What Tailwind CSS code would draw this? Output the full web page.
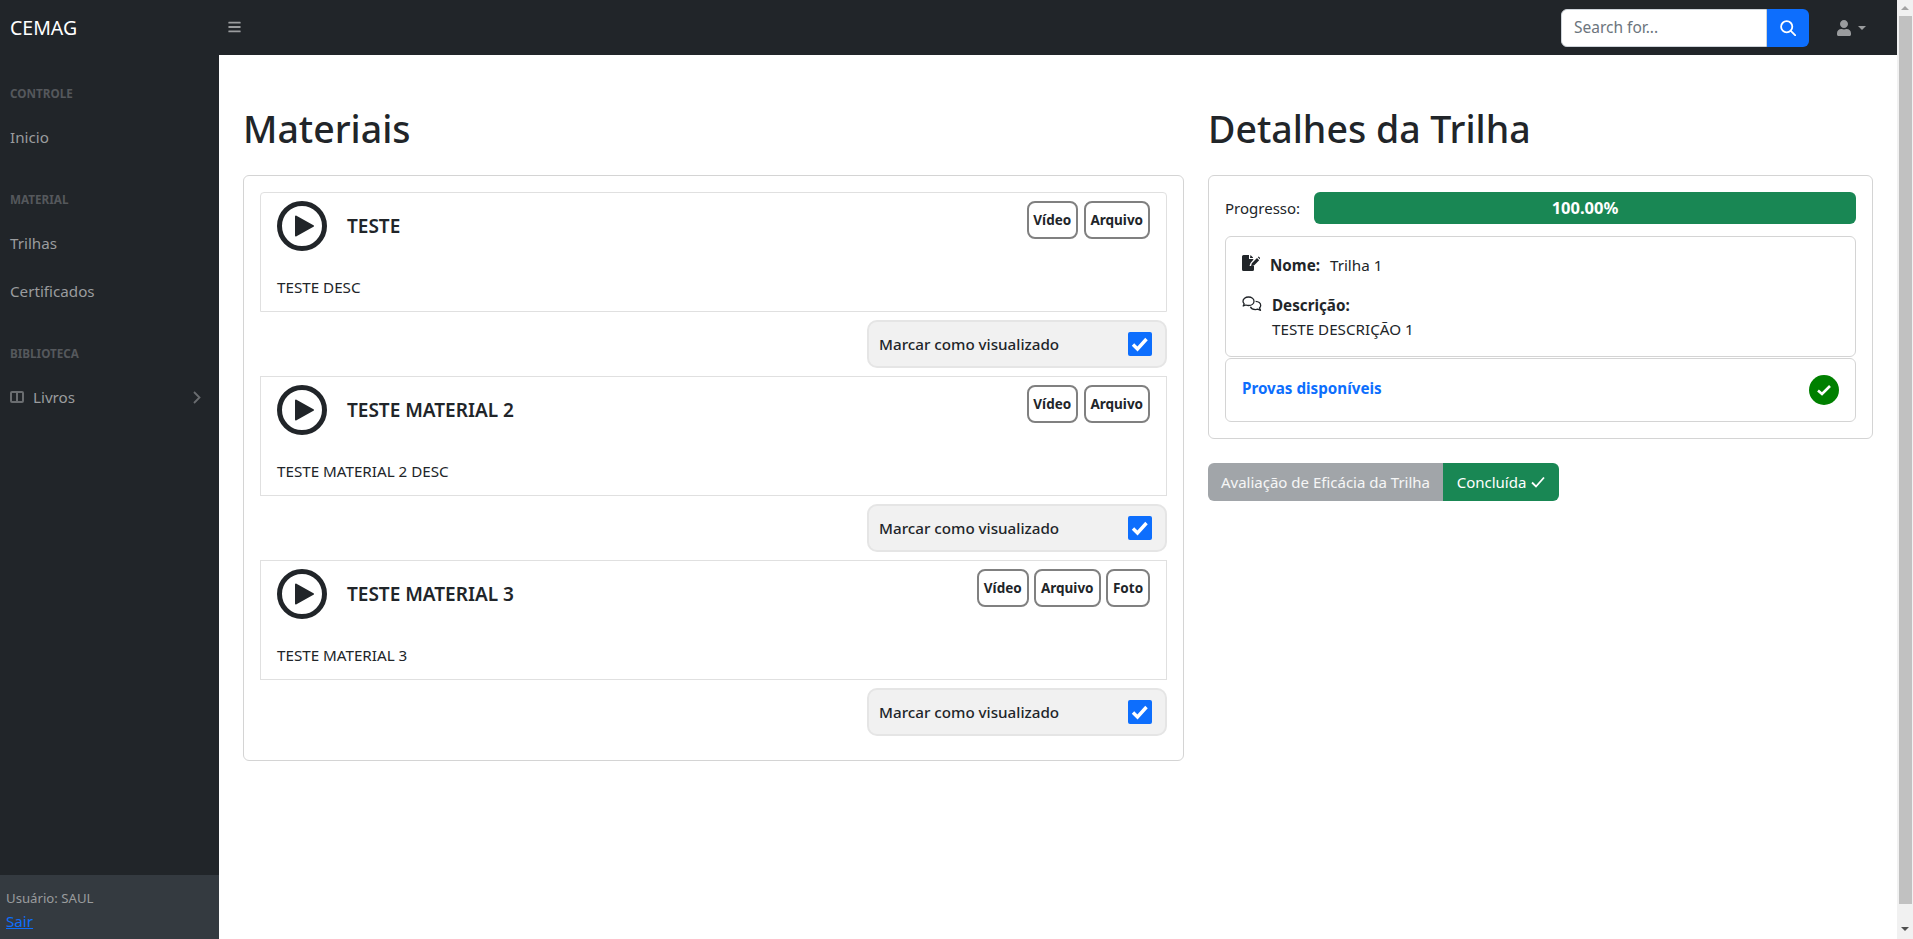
<!DOCTYPE html>
<html lang="pt-BR">
    <head>
        <meta charset="UTF-8">
        <meta name="viewport" content="width=device-width, initial-scale=1.0">
        <title>CEMAG</title>
        <script src="https://cdn.jsdelivr.net/npm/@tailwindcss/browser@4"></script>
    </head>
    <body class="h-screen overflow-hidden flex bg-white text-[#212529] text-[15.2px] leading-6 font-['Noto_Sans','Open_Sans',sans-serif]">
        <div class="flex-1 flex flex-col min-w-0">
            <!-- Navbar -->
            <nav class="h-[55px] bg-[#212529] flex items-center shrink-0">
                <a class="w-[219px] pl-[10px] text-[19.5px] text-white">CEMAG</a>
                <button class="ml-[9px] -mt-[1px]" aria-label="Menu">
                    <svg class="w-[13px] h-[14px] text-[#9a9c9e]" viewBox="0 0 448 512" fill="currentColor"><path d="M16 132h416c8.837 0 16-7.163 16-16V76c0-8.837-7.163-16-16-16H16C7.163 60 0 67.163 0 76v40c0 8.837 7.163 16 16 16zm0 160h416c8.837 0 16-7.163 16-16v-40c0-8.837-7.163-16-16-16H16c-8.837 0-16 7.163-16 16v40c0 8.837 7.163 16 16 16zm0 160h416c8.837 0 16-7.163 16-16v-40c0-8.837-7.163-16-16-16H16c-8.837 0-16 7.163-16 16v40c0 8.837 7.163 16 16 16z"/></svg>
                </button>
                <div class="ml-auto flex h-[38px] w-[248px]">
                    <div class="flex-1 bg-white rounded-l-md border border-[#ced4da] pl-[12px] pb-[2px] flex items-center text-[#6c757d] text-[15.5px]">Search for...</div>
                    <button class="w-[42px] bg-[#0d6efd] rounded-r-md flex items-center justify-center" aria-label="Buscar">
                        <svg class="w-4 h-4" viewBox="0 0 16 16" fill="none" stroke="#fff" stroke-width="1.800"><circle cx="6.700" cy="6.700" r="5.600"/><path d="M10.800 10.800l4.500 4.500" stroke-linecap="round"/></svg>
                    </button>
                </div>
                <div class="ml-[28px] mr-[31px] flex items-center gap-[7px] text-[#9a9c9e]">
                    <svg class="w-[14px] h-4" viewBox="0 0 448 512" fill="currentColor"><path d="M224 256c70.7 0 128-57.3 128-128S294.7 0 224 0 96 57.3 96 128s57.3 128 128 128zm89.6 32h-16.7c-22.2 10.2-46.9 16-72.9 16s-50.6-5.8-72.9-16h-16.7C60.2 288 0 348.2 0 422.4V464c0 26.5 21.5 48 48 48h352c26.5 0 48-21.5 48-48v-41.6c0-74.2-60.2-134.4-134.4-134.4z"/></svg>
                    <span class="border-x-[4px] border-x-transparent border-t-[4px] border-t-[#9a9c9e]"></span>
                </div>
            </nav>

            <div class="flex-1 flex min-h-0">
                <!-- Sidebar -->
                <aside class="w-[219px] shrink-0 bg-[#212529] flex flex-col text-[#9a9c9e]">
                    <div class="pt-[29px] pb-[11px] px-[10px] text-[11.7px] leading-[18px] font-bold text-[#55585c]">CONTROLE</div>
                    <a class="block px-[10px] py-3">Inicio</a>
                    <div class="pt-[29px] pb-[11px] px-[10px] text-[11.7px] leading-[18px] font-bold text-[#55585c]">MATERIAL</div>
                    <a class="block px-[10px] py-3">Trilhas</a>
                    <a class="block px-[10px] py-3">Certificados</a>
                    <div class="pt-[29px] pb-[11px] px-[10px] text-[11.7px] leading-[18px] font-bold text-[#55585c]">BIBLIOTECA</div>
                    <a class="flex items-center px-[10px] py-3">
                        <svg class="w-[14px] h-[12px] mr-[9px] text-[#6a6d70]" viewBox="0 0 14 12" fill="none" stroke="currentColor" stroke-width="2"><rect x="1" y="1" width="12" height="10" rx="1"/><path d="M7 1v10"/></svg>
                        <span>Livros</span>
                        <svg class="ml-auto mr-[8px] w-[8px] h-[13px] text-[#6a6d70]" viewBox="0 0 8 13" fill="none" stroke="currentColor" stroke-width="1.800"><path d="M1 1l5.500 5.500L1 12"/></svg>
                    </a>
                    <div class="mt-auto h-[64px] bg-[#343a40] pl-[6px] pt-[12px] text-[13.2px]">
                        <div class="leading-[23px]">Usuário: SAUL</div>
                        <a class="block text-[#0d6efd] underline text-[15.2px] leading-[22px]">Sair</a>
                    </div>
                </aside>

                <!-- Conteudo -->
                <main class="flex-1 min-w-0 pl-[24px] pt-[50px] grid grid-cols-[941px_665px] gap-x-[24px] content-start">
                    <section>
                        <h1 class="text-[37.5px] leading-[48px] font-medium mb-[22px]">Materiais</h1>
                        <div class="border border-[#d4d4d4] rounded-md px-4 pt-4 pb-6">
                            <!-- Material 1 -->
                            <div class="h-[120px] border border-[#e0e0e0] rounded-t-sm pt-2 px-4">
                                <div class="flex h-[50px]">
                                    <svg class="w-[50px] h-[50px] shrink-0" viewBox="0 0 50 50"><circle cx="25" cy="25" r="22.500" fill="none" stroke="#212529" stroke-width="5"/><path d="M19 15.500L36 25 19 34.500Z" fill="#212529" stroke="#212529" stroke-width="2" stroke-linejoin="round"/></svg>
                                    <h5 class="ml-5 self-center text-[19px] font-semibold">TESTE</h5>
                                    <div class="ml-auto flex gap-[5.500px] text-[13.500px] font-bold">
                                        <span class="h-[38px] w-[51.500px] border-2 border-[#808080] rounded-lg flex items-center justify-center">Vídeo</span>
                                        <span class="h-[38px] w-[66.500px] border-2 border-[#808080] rounded-lg flex items-center justify-center">Arquivo</span>
                                    </div>
                                </div>
                                <p class="mt-6">TESTE DESC</p>
                            </div>
                            <div class="ml-auto mt-2 h-[48px] w-[300px] bg-[#f1f1f1] border-2 border-[#e5e5e5] rounded-[10px] pl-[10px] pr-[13px] flex items-center justify-between font-medium">
                                <span>Marcar como visualizado</span>
                                <span class="w-6 h-6 bg-[#0d6efd] rounded-[2px] flex items-center justify-center"><svg class="w-5 h-5" viewBox="0 0 20 20" fill="none" stroke="#fff" stroke-width="3.400"><path d="M3 10.500l4.500 4.500 9-10"/></svg></span>
                            </div>

                            <!-- Material 2 -->
                            <div class="mt-2 h-[120px] border border-[#e0e0e0] pt-2 px-4">
                                <div class="flex h-[50px]">
                                    <svg class="w-[50px] h-[50px] shrink-0" viewBox="0 0 50 50"><circle cx="25" cy="25" r="22.500" fill="none" stroke="#212529" stroke-width="5"/><path d="M19 15.500L36 25 19 34.500Z" fill="#212529" stroke="#212529" stroke-width="2" stroke-linejoin="round"/></svg>
                                    <h5 class="ml-5 self-center text-[19px] font-semibold">TESTE MATERIAL 2</h5>
                                    <div class="ml-auto flex gap-[5.500px] text-[13.500px] font-bold">
                                        <span class="h-[38px] w-[51.500px] border-2 border-[#808080] rounded-lg flex items-center justify-center">Vídeo</span>
                                        <span class="h-[38px] w-[66.500px] border-2 border-[#808080] rounded-lg flex items-center justify-center">Arquivo</span>
                                    </div>
                                </div>
                                <p class="mt-6">TESTE MATERIAL 2 DESC</p>
                            </div>
                            <div class="ml-auto mt-2 h-[48px] w-[300px] bg-[#f1f1f1] border-2 border-[#e5e5e5] rounded-[10px] pl-[10px] pr-[13px] flex items-center justify-between font-medium">
                                <span>Marcar como visualizado</span>
                                <span class="w-6 h-6 bg-[#0d6efd] rounded-[2px] flex items-center justify-center"><svg class="w-5 h-5" viewBox="0 0 20 20" fill="none" stroke="#fff" stroke-width="3.400"><path d="M3 10.500l4.500 4.500 9-10"/></svg></span>
                            </div>

                            <!-- Material 3 -->
                            <div class="mt-2 h-[120px] border border-[#e0e0e0] pt-2 px-4">
                                <div class="flex h-[50px]">
                                    <svg class="w-[50px] h-[50px] shrink-0" viewBox="0 0 50 50"><circle cx="25" cy="25" r="22.500" fill="none" stroke="#212529" stroke-width="5"/><path d="M19 15.500L36 25 19 34.500Z" fill="#212529" stroke="#212529" stroke-width="2" stroke-linejoin="round"/></svg>
                                    <h5 class="ml-5 self-center text-[19px] font-semibold">TESTE MATERIAL 3</h5>
                                    <div class="ml-auto flex gap-[5.500px] text-[13.500px] font-bold">
                                        <span class="h-[38px] w-[51.500px] border-2 border-[#808080] rounded-lg flex items-center justify-center">Vídeo</span>
                                        <span class="h-[38px] w-[66.500px] border-2 border-[#808080] rounded-lg flex items-center justify-center">Arquivo</span>
                                        <span class="h-[38px] w-[44px] border-2 border-[#808080] rounded-lg flex items-center justify-center">Foto</span>
                                    </div>
                                </div>
                                <p class="mt-6">TESTE MATERIAL 3</p>
                            </div>
                            <div class="ml-auto mt-2 h-[48px] w-[300px] bg-[#f1f1f1] border-2 border-[#e5e5e5] rounded-[10px] pl-[10px] pr-[13px] flex items-center justify-between font-medium">
                                <span>Marcar como visualizado</span>
                                <span class="w-6 h-6 bg-[#0d6efd] rounded-[2px] flex items-center justify-center"><svg class="w-5 h-5" viewBox="0 0 20 20" fill="none" stroke="#fff" stroke-width="3.400"><path d="M3 10.500l4.500 4.500 9-10"/></svg></span>
                            </div>
                        </div>
                    </section>

                    <section>
                        <h1 class="text-[37.5px] leading-[48px] font-medium mb-[22px]">Detalhes da Trilha</h1>
                        <div class="border border-[#d4d4d4] rounded-md px-4 pt-4 pb-4">
                            <div class="flex items-center h-[32px]">
                                <span class="w-[89px] text-[15px]">Progresso:</span>
                                <div class="flex-1 h-[32px] bg-[#198754] rounded-md text-white text-[16.5px] font-bold flex items-center justify-center">100.00%</div>
                            </div>
                            <div class="mt-3 h-[121px] border border-[#d4d4d4] rounded-md pl-4 pt-[16px]">
                                <div class="flex items-center h-6">
                                    <svg class="w-[18px] h-[16px] mr-[10px] -mt-1" viewBox="0 0 18 16" fill="#212529"><path d="M0 1.500A1.500 1.500 0 0 1 1.500 0H7v4h4l.5.500L8.500 8l-1 3H12v3.500A1.500 1.500 0 0 1 10.500 16h-9A1.500 1.500 0 0 1 0 14.500Z"/><path d="M8.500 0L11 2.500V3H8Z"/><path d="M9.800 8.200L15 3l2.200 2.200-5.200 5.200-3 .8ZM15.800 2.200l.8-.8 2 2-.8.8Z"/></svg>
                                    <b class="font-bold">Nome:</b>
                                    <span class="ml-[10px]">Trilha 1</span>
                                </div>
                                <div class="flex mt-4">
                                    <svg class="w-5 h-[16px] mr-[10px] mt-[3px] shrink-0" viewBox="0 0 20 16" fill="none" stroke="#212529" stroke-width="1.300" stroke-linejoin="round"><path d="M6.500 1C3.400 1 1 2.900 1 5.200c0 1 .5 1.900 1.200 2.700L1.200 10l2.700-1c.8.300 1.700.500 2.600.500 3.100 0 5.500-1.900 5.500-4.300S9.600 1 6.500 1Z"/><path d="M13.600 5.400c2.900.100 5.100 1.800 5.100 4 0 1-.5 1.900-1.200 2.600l1 2.300-2.800-1.100c-.700.300-1.500.400-2.300.400-2.300 0-4.300-1.100-5-2.800"/></svg>
                                    <div>
                                        <b class="block font-bold">Descrição:</b>
                                        <span class="block">TESTE DESCRIÇÃO 1</span>
                                    </div>
                                </div>
                            </div>
                            <div class="mt-px h-[64px] border border-[#d4d4d4] rounded-md pl-4 pr-4 flex items-center justify-between">
                                <a class="text-[#0d6efd] font-bold pb-[4px]">Provas disponíveis</a>
                                <span class="w-[30px] h-[30px] rounded-full bg-[#008000] flex items-center justify-center"><svg class="w-[16px] h-[16px]" viewBox="0 0 16 16" fill="none" stroke="#fff" stroke-width="2.600"><path d="M2 8.500l4 3.500 8-8"/></svg></span>
                            </div>
                        </div>
                        <div class="mt-[24px] flex h-[38px] text-[15px]">
                            <span class="w-[235px] bg-[#a1a5a9] text-white/90 rounded-l-md flex items-center justify-center">Avaliação de Eficácia da Trilha</span>
                            <span class="w-[116px] bg-[#198754] text-white rounded-r-md flex items-center justify-center gap-[5px]">Concluída <svg class="w-[14px] h-[14px]" viewBox="0 0 14 14" fill="none" stroke="#fff" stroke-width="1.800"><path d="M1 7.500l4 4 8-9"/></svg></span>
                        </div>
                    </section>
                </main>
            </div>
        </div>

        <!-- Scrollbar -->
        <div class="w-4 shrink-0 bg-[#f1f1f1] flex flex-col">
            <div class="h-4 flex items-center justify-center"><span class="border-x-[4px] border-x-transparent border-b-[4px] border-b-[#a3a3a3]"></span></div>
            <div class="ml-[2px] w-[13px] h-[888px] bg-[#c1c1c1]"></div>
            <div class="mt-auto h-[12px] flex justify-center"><span class="h-0 border-x-[4px] border-x-transparent border-t-[4px] border-t-[#505050]"></span></div>
        </div>
    </body>
</html>
